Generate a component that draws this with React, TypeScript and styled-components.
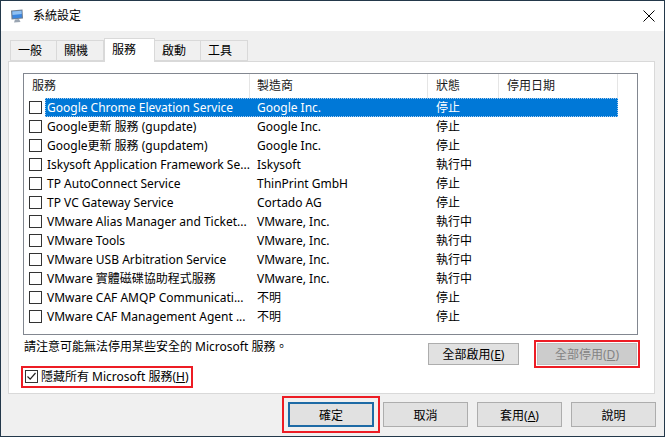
import React from 'react';
import styled, { createGlobalStyle } from 'styled-components';

const services = [
  { name: 'Google Chrome Elevation Service', maker: 'Google Inc.', state: '停止' },
  { name: 'Google更新 服務 (gupdate)', maker: 'Google Inc.', state: '停止' },
  { name: 'Google更新 服務 (gupdatem)', maker: 'Google Inc.', state: '停止' },
  { name: 'Iskysoft Application Framework Se...', maker: 'Iskysoft', state: '執行中' },
  { name: 'TP AutoConnect Service', maker: 'ThinPrint GmbH', state: '停止' },
  { name: 'TP VC Gateway Service', maker: 'Cortado AG', state: '停止' },
  { name: 'VMware Alias Manager and Ticket...', maker: 'VMware, Inc.', state: '執行中' },
  { name: 'VMware Tools', maker: 'VMware, Inc.', state: '執行中' },
  { name: 'VMware USB Arbitration Service', maker: 'VMware, Inc.', state: '執行中' },
  { name: 'VMware 實體磁碟協助程式服務', maker: 'VMware, Inc.', state: '執行中' },
  { name: 'VMware CAF AMQP Communicati...', maker: '不明', state: '停止' },
  { name: 'VMware CAF Management Agent ...', maker: '不明', state: '停止' },
];

const tabs = [
  { label: '一般', width: 47 },
  { label: '關機', width: 47 },
  { label: '服務', width: 51 },
  { label: '啟動', width: 46 },
  { label: '工具', width: 47 },
];

const cols = [226, 178, 71, 119];

const GlobalStyle = createGlobalStyle`
  html, body {
    margin: 0;
    padding: 0;
    background: #ffffff;
  }
  body {
    font-family: 'Noto Sans', 'Noto Sans CJK TC', sans-serif;
    font-size: 12px;
    color: #000;
  }
`;

const Window = styled.div`
  width: 665px;
  height: 437px;
  box-sizing: border-box;
  border: 1px solid #23384a;
  display: flex;
  flex-direction: column;
  background: #f0f0f0;
`;

const TitleBar = styled.div`
  height: 30px;
  background: #ffffff;
  display: flex;
  align-items: center;
  padding: 0 9px 0 9px;
  gap: 9px;
`;

const Title = styled.span`
  flex: 1;
  font-size: 12px;
  line-height: 16px;
`;

const Body = styled.div`
  flex: 1;
  display: flex;
  flex-direction: column;
  padding: 7px 9px 0 7px;
`;

const TabStrip = styled.div`
  height: 23px;
  display: flex;
  align-items: flex-end;
  padding-left: 2px;
`;

const Tab = styled.div<{ $active?: boolean }>`
  box-sizing: border-box;
  height: ${({ $active }) => ($active ? '24px' : '21px')};
  margin-bottom: ${({ $active }) => ($active ? '-1px' : '0')};
  background: ${({ $active }) => ($active ? '#ffffff' : '#f0f0f0')};
  border: 1px solid #d9d9d9;
  border-bottom: ${({ $active }) => ($active ? 'none' : '1px solid #d9d9d9')};
  border-left: ${({ $active }) => ($active ? '1px solid #d9d9d9' : 'none')};
  padding: ${({ $active }) => ($active ? '2px 0 0 7px' : '1px 0 0 7px')};
  line-height: 17px;
  position: relative;
  z-index: ${({ $active }) => ($active ? 1 : 0)};
  &:first-child {
    border-left: 1px solid #d9d9d9;
  }
`;

const Panel = styled.div`
  box-sizing: border-box;
  height: 333px;
  background: #ffffff;
  border: 1px solid #d9d9d9;
  padding: 11px 16px 0 14px;
  display: flex;
  flex-direction: column;
`;

const ListView = styled.div`
  box-sizing: border-box;
  height: 262px;
  border: 1px solid #828790;
  background: #ffffff;
`;

const HeaderRow = styled.div`
  display: flex;
  height: 24px;
`;

const HeaderCell = styled.div<{ $pad: number }>`
  box-sizing: border-box;
  height: 24px;
  border-right: 1px solid #e5e5e5;
  padding-left: ${({ $pad }) => $pad}px;
  line-height: 24px;
  color: #1a1a1a;
  flex-shrink: 0;
`;

const Row = styled.div`
  display: flex;
  height: 19px;
  align-items: center;
`;

const CheckCell = styled.div`
  width: 21px;
  flex-shrink: 0;
  display: flex;
  align-items: center;
  padding-left: 5px;
  box-sizing: border-box;
`;

const Box = styled.span`
  width: 13px;
  height: 13px;
  box-sizing: border-box;
  border: 1px solid #333333;
  background: #ffffff;
  display: inline-flex;
  align-items: center;
  justify-content: center;
  flex-shrink: 0;
`;

const Cells = styled.div<{ $selected?: boolean }>`
  display: flex;
  height: 19px;
  background: ${({ $selected }) => ($selected ? '#0078d7' : 'transparent')};
  color: ${({ $selected }) => ($selected ? '#ffffff' : '#000000')};
  outline: ${({ $selected }) => ($selected ? '1px dotted #a9cdf0' : 'none')};
  outline-offset: -1px;
`;

const Cell = styled.div<{ $w: number; $pad: number }>`
  width: ${({ $w }) => $w}px;
  padding-left: ${({ $pad }) => $pad}px;
  box-sizing: border-box;
  line-height: 19px;
  white-space: nowrap;
  overflow: hidden;
  flex-shrink: 0;
`;

const Footer = styled.div`
  display: grid;
  grid-template-columns: 1fr auto;
  padding: 4px 1px 0 1px;
`;

const Note = styled.div`
  line-height: 16px;
  align-self: start;
`;

const ButtonGroup = styled.div`
  display: flex;
  gap: 18px;
  margin-top: 4px;
`;

const Button = styled.button<{ $w: number; $h: number; $disabled?: boolean; $default?: boolean; $marked?: number }>`
  width: ${({ $w }) => $w}px;
  height: ${({ $h }) => $h}px;
  box-sizing: border-box;
  font-family: 'Noto Sans', 'Noto Sans CJK TC', sans-serif;
  font-size: 12px;
  padding: 0;
  background: ${({ $disabled }) => ($disabled ? '#cccccc' : '#e1e1e1')};
  color: ${({ $disabled }) => ($disabled ? '#838383' : '#000000')};
  border: ${({ $default, $disabled }) =>
    $default ? '2px solid #1d6aa5' : $disabled ? '1px solid #bfbfbf' : '1px solid #adadad'};
  outline: ${({ $marked }) => ($marked !== undefined ? '2px solid #ed1c24' : 'none')};
  outline-offset: ${({ $marked }) => $marked ?? 0}px;
  border-radius: 0;
  cursor: default;
`;

const CheckLabel = styled.label`
  grid-column: 1 / 3;
  justify-self: start;
  display: flex;
  align-items: center;
  gap: 3px;
  margin: 3px 0 0 -1px;
  padding: 1px 2px 2px 2px;
  line-height: 15px;
  outline: 2px solid #ed1c24;
`;

const DialogButtons = styled.div`
  display: flex;
  justify-content: flex-end;
  gap: 9px;
  margin: 8px -1px 0 0;
`;

const Key = styled.span`
  text-decoration: underline;
  text-underline-offset: 1px;
`;

const AppIcon = () => (
  <svg width="14" height="14" viewBox="0 0 14 14">
    <path d="M1 1.5 L12.5 0.5 L13 9.5 L1.5 10.5 Z" fill="#6f7f92" />
    <path d="M2.3 2.5 L11.5 1.7 L11.9 8.6 L2.7 9.4 Z" fill="#3a86e0" />
    <path d="M2.3 2.5 L11.5 1.7 L11.7 5 L2.5 6 Z" fill="#8fc0f2" />
    <path d="M5 10.4 L9 10 L10.5 13 L4 13.5 Z" fill="#9aa5b2" />
  </svg>
);

const CloseIcon = () => (
  <svg width="12" height="12" viewBox="0 0 12 12">
    <path d="M0.5 0.5 L11.5 11.5 M11.5 0.5 L0.5 11.5" stroke="#000" strokeWidth="1" />
  </svg>
);

const Check = () => (
  <svg width="11" height="11" viewBox="0 0 11 11">
    <path d="M1.5 5.5 L4.2 8.2 L9.5 2" fill="none" stroke="#222" strokeWidth="1.2" />
  </svg>
);

const App = () => {
  return (
    <>
      <GlobalStyle />
      <Window>
        <TitleBar>
          <AppIcon />
          <Title>系統設定</Title>
          <CloseIcon />
        </TitleBar>
        <Body>
          <TabStrip>
            {tabs.map(t => (
              <Tab key={t.label} $active={t.label === '服務'} style={{ width: t.width }}>
                {t.label}
              </Tab>
            ))}
          </TabStrip>
          <Panel>
            <ListView>
              <HeaderRow>
                <HeaderCell $pad={8} style={{ width: cols[0] }}>服務</HeaderCell>
                <HeaderCell $pad={7} style={{ width: cols[1] }}>製造商</HeaderCell>
                <HeaderCell $pad={8} style={{ width: cols[2] }}>狀態</HeaderCell>
                <HeaderCell $pad={8} style={{ width: cols[3] }}>停用日期</HeaderCell>
              </HeaderRow>
              {services.map((s, i) => (
                <Row key={s.name}>
                  <CheckCell>
                    <Box />
                  </CheckCell>
                  <Cells $selected={i === 0}>
                    <Cell $w={cols[0] - 21} $pad={2}>{s.name}</Cell>
                    <Cell $w={cols[1]} $pad={7}>{s.maker}</Cell>
                    <Cell $w={cols[2]} $pad={8}>{s.state}</Cell>
                    <Cell $w={cols[3]} $pad={8}></Cell>
                  </Cells>
                </Row>
              ))}
            </ListView>
            <Footer>
              <Note>請注意可能無法停用某些安全的 Microsoft 服務。</Note>
              <ButtonGroup>
                <Button $w={91} $h={22}>
                  全部啟用(<Key>E</Key>)
                </Button>
                <Button $w={100} $h={22} $disabled $marked={1}>
                  全部停用(<Key>D</Key>)
                </Button>
              </ButtonGroup>
              <CheckLabel>
                <Box>
                  <Check />
                </Box>
                <span>
                  隱藏所有 Microsoft 服務(<Key>H</Key>)
                </span>
              </CheckLabel>
            </Footer>
          </Panel>
          <DialogButtons>
            <Button $w={86} $h={25} $default $marked={4}>確定</Button>
            <Button $w={85} $h={25}>取消</Button>
            <Button $w={85} $h={25}>
              套用(<Key>A</Key>)
            </Button>
            <Button $w={85} $h={25}>說明</Button>
          </DialogButtons>
        </Body>
      </Window>
    </>
  );
};

export default App;
